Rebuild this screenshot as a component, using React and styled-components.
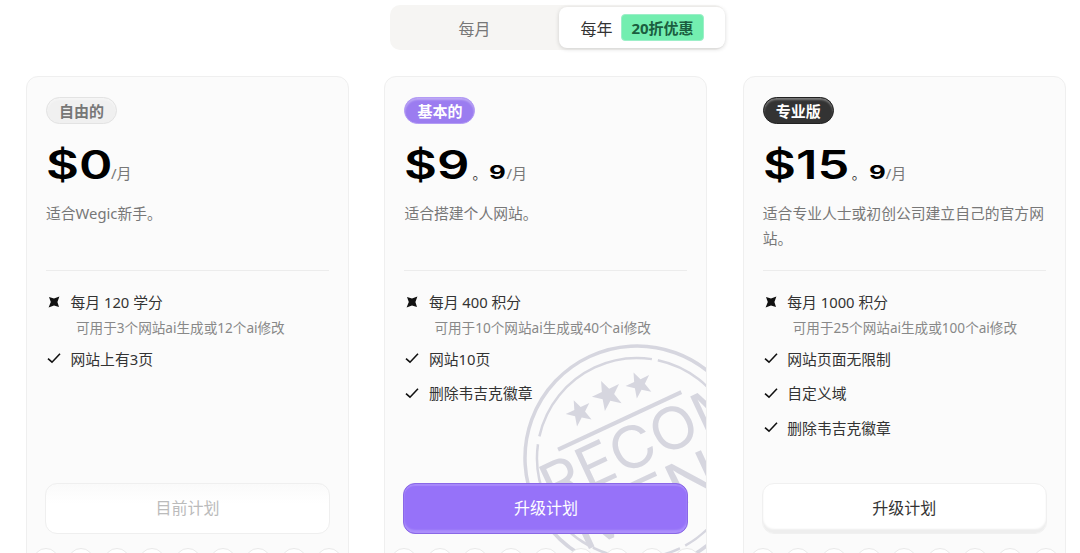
import React from "react";
import styled, { createGlobalStyle } from "styled-components";

const Global = createGlobalStyle`
  html, body { margin: 0; padding: 0; background: #fff; height: 100%; overflow: hidden; }
  body { font-family: "Noto Sans", "Noto Sans CJK SC", sans-serif; }
`;

const Page = styled.div`
  width: 1080px;
  height: 553px;
  overflow: hidden;
  display: flex;
  flex-direction: column;
  align-items: center;
  padding-top: 5px;
  box-sizing: border-box;
`;

const Toggle = styled.div`
  flex: none;
  width: 335px;
  height: 45px;
  box-sizing: border-box;
  padding: 2px 0 2px 0;
  background: #f6f5f3;
  border-radius: 10px;
  display: grid;
  grid-template-columns: 169px 166px;
  margin-left: 35px;
`;

const Tab = styled.div`
  display: flex;
  align-items: center;
  justify-content: center;
  gap: 9px;
  font-size: 16px;
  color: ${(p) => (p.$active ? "#333" : "#777")};
  background: ${(p) => (p.$active ? "#fff" : "transparent")};
  border-radius: 8px;
  box-shadow: ${(p) => (p.$active ? "0 1px 4px rgba(0,0,0,.16)" : "none")};
`;

const Discount = styled.span`
  height: 27px;
  padding: 0 9px;
  display: flex;
  align-items: center;
  background: #73eeb0;
  border: 1px solid #9cefc8;
  box-sizing: border-box;
  border-radius: 4px;
  color: #1b5e3f;
  font-size: 15px;
  font-weight: 700;
  white-space: nowrap;
`;

const Cards = styled.div`
  flex: none;
  display: grid;
  grid-template-columns: repeat(3, 323px);
  gap: 35.4px;
  margin-top: 26px;
  margin-left: 11.8px;
`;

const Card = styled.div`
  position: relative;
  height: 500px;
  box-sizing: border-box;
  overflow: hidden;
  border: 1px solid #efefef;
  border-radius: 12px;
  background: #fbfbfb;
  padding: 20px 18px 0 18px;
  display: flex;
  flex-direction: column;
`;

const Badge = styled.span`
  position: relative;
  align-self: flex-start;
  margin-left: 1px;
  width: 71px;
  height: 27px;
  padding-bottom: 1px;
  flex: none;
  box-sizing: border-box;
  display: flex;
  align-items: center;
  justify-content: center;
  border-radius: 14px;
  font-size: 15px;
  font-weight: 700;
  color: ${(p) => (p.$tone === "free" ? "#777" : "#fff")};
  background: ${(p) =>
    p.$tone === "free" ? "#f0f0f0" : p.$tone === "basic" ? "#9b7cf0" : "#333"};
  border: 1px solid ${(p) =>
    p.$tone === "free" ? "#e3e3e3" : p.$tone === "basic" ? "#b39bf5" : "#222"};
  box-shadow: inset 0 2px 2px rgba(255,255,255,.35);
`;

const Price = styled.div`
  position: relative;
  display: flex;
  align-items: baseline;
  margin: 15px 0 0 1px;
  height: 52px;
  line-height: 52px;
  color: #000;
`;

const Amount = styled.span`
  display: inline-block;
  width: ${(p) => p.$w}px;
  font-family: Inter, sans-serif;
  font-weight: 600;
  font-size: 39px;
  transform: scaleX(1.3);
  transform-origin: left center;
  white-space: nowrap;
`;

const Cents = styled.span`
  font-size: 19px;
  font-family: Inter, sans-serif;
  font-weight: 700;
  display: inline-block;
  width: ${(p) => p.$w}px;
  transform: scaleX(1.36);
  transform-origin: left center;
  white-space: nowrap;
`;

const Dot = styled.span`
  font-size: 14px;
  color: #333;
  width: 20px;
  padding-left: 3px;
  box-sizing: border-box;
  font-family: "Noto Sans CJK SC", sans-serif;
`;

const Per = styled.span`
  font-size: 15px;
  color: #777;
`;

const Desc = styled.p`
  position: relative;
  margin: 10px 0 0 1px;
  height: 50px;
  font-size: 14.8px;
  line-height: 25px;
  color: #777;
`;

const Divider = styled.div`
  height: 1px;
  flex: none;
  margin: 19px 1px 0 1px;
  background: #ececec;
`;

const Features = styled.ul`
  position: relative;
  list-style: none;
  margin: 20px 0 0 0;
  padding: 0 0 0 3px;
  height: 192px;
  display: flex;
  flex-direction: column;
`;

const Feature = styled.li`
  display: flex;
  align-items: center;
  gap: 10.5px;
  height: 21px;
  margin-bottom: 13.5px;
  font-size: 14.8px;
  color: #333;
  white-space: nowrap;
`;

const Sub = styled.div`
  height: 21px;
  margin: -9px 0 10px 28px;
  font-size: 13.6px;
  line-height: 21px;
  color: #888;
  white-space: nowrap;
`;

const Button = styled.button`
  position: relative;
  width: 285px;
  height: 51px;
  flex: none;
  margin: 0;
  padding: 0 0 3px;
  border-radius: 12px;
  font-family: inherit;
  font-size: 16px;
  box-sizing: border-box;
  cursor: pointer;
  ${(p) =>
    p.$variant === "current" &&
    `background: linear-gradient(#fafafa, #fff 40%); border: 1px solid #efefef; color: #bbb;`}
  ${(p) =>
    p.$variant === "primary" &&
    `background: #9672f9; border: 1px solid #8a68e6; color: #fff; box-shadow: inset 0 -3px 2px rgba(200,180,255,.45), inset 0 2px 1px rgba(200,180,255,.35);`}
  ${(p) =>
    p.$variant === "plain" &&
    `background: #fff; border: 1px solid #f0f0f0; color: #333; box-shadow: inset 0 -4px 2px #eeeeee;`}
`;

const Scallops = styled.div`
  position: absolute;
  left: 0;
  right: 0;
  top: 471px;
  display: flex;
  justify-content: center;
  gap: 9.4px;
`;

const Bump = styled.span`
  width: 26px;
  height: 26px;
  flex: none;
  border-radius: 50%;
  background: #fff;
  border: 1px solid #e9e9e9;
  box-sizing: border-box;
`;

const StampWrap = styled.svg`
  position: absolute;
  left: 140px;
  top: 269px;
  width: 224px;
  height: 224px;
  overflow: visible;
`;

const Stamp = () => (
  <StampWrap viewBox="-112 -112 224 224" aria-hidden="true">
    <g transform="rotate(-25)" fill="#d6d6df" stroke="none">
      <circle r="112" fill="none" stroke="#d6d6df" strokeWidth="3.5" />
      <circle r="100" fill="none" stroke="#d6d6df" strokeWidth="2.5" strokeDasharray="150 6 90 5 120 8" />
      <rect x="-68" y="-43" width="136" height="4" />
      {[-33, 0, 33].map((x, i) => (
        <polygon
          key={x}
          transform={`translate(${x} ${i === 1 ? -70 : -66}) scale(${i === 1 ? 1.15 : 1})`}
          points="0,-13 3.5,-4 13,-4 5.5,2 8,12 0,6 -8,12 -5.5,2 -13,-4 -3.5,-4"
        />
      ))}
      <text x="-98" y="9" fontFamily="Inter, sans-serif" fontSize="58" textLength="222" lengthAdjust="spacingAndGlyphs">RECOM</text>
      <text x="-88" y="62" fontFamily="Inter, sans-serif" fontSize="58" textLength="205" lengthAdjust="spacingAndGlyphs">MEND</text>
    </g>
  </StampWrap>
);

const Sparkle = () => (
  <svg width="12" height="12" viewBox="0 0 12 12" fill="#111" style={{ flex: "none" }}>
    <path d="M0.6 11.6 L2.8 6 L1 1 L6 2.6 L11.4 0.6 L9.4 6 L11 11 L6 9.4 Z" />
  </svg>
);

const Check = () => (
  <svg width="14" height="14" viewBox="0 0 14 14" fill="none" stroke="#111" strokeWidth="1.6" style={{ flex: "none", marginLeft: "-1px", marginRight: "-1px" }}>
    <path d="M1 7.6 L5 11.2 L13 2.8" />
  </svg>
);

const plans = [
  {
    tone: "free", badge: "自由的", amount: "$0", w: 65, desc: "适合Wegic新手。",
    credit: "每月 120 学分", sub: "可用于3个网站ai生成或12个ai修改",
    items: ["网站上有3页"], variant: "current", cta: "目前计划",
  },
  {
    tone: "basic", badge: "基本的", amount: "$9", w: 65, cents: true, desc: "适合搭建个人网站。",
    credit: "每月 400 积分", sub: "可用于10个网站ai生成或40个ai修改",
    items: ["网站10页", "删除韦吉克徽章"], variant: "primary", cta: "升级计划", stamp: true,
  },
  {
    tone: "pro", badge: "专业版", amount: "$15", w: 86, cents: true, desc: "适合专业人士或初创公司建立自己的官方网站。",
    credit: "每月 1000 积分", sub: "可用于25个网站ai生成或100个ai修改",
    items: ["网站页面无限制", "自定义域", "删除韦吉克徽章"], variant: "plain", cta: "升级计划",
  },
];

export default function App() {
  return (
    <Page>
      <Global />
      <Toggle>
        <Tab>每月</Tab>
        <Tab $active>
          每年
          <Discount>20折优惠</Discount>
        </Tab>
      </Toggle>
      <Cards>
        {plans.map((p) => (
          <Card key={p.tone}>
            {p.stamp && <Stamp />}
            <Badge $tone={p.tone}>{p.badge}</Badge>
            <Price>
              <Amount $w={p.w}>{p.amount}</Amount>
              {p.cents && <Dot>。</Dot>}
              {p.cents && <Cents $w={17}>9</Cents>}
              <Per>/月</Per>
            </Price>
            <Desc>{p.desc}</Desc>
            <Divider />
            <Features>
              <Feature><Sparkle />{p.credit}</Feature>
              <Sub>{p.sub}</Sub>
              {p.items.map((it) => (
                <Feature key={it}><Check />{it}</Feature>
              ))}
            </Features>
            <Button $variant={p.variant}>{p.cta}</Button>
            <Scallops>
              {Array.from({ length: 9 }).map((_, i) => <Bump key={i} />)}
            </Scallops>
          </Card>
        ))}
      </Cards>
    </Page>
  );
}
